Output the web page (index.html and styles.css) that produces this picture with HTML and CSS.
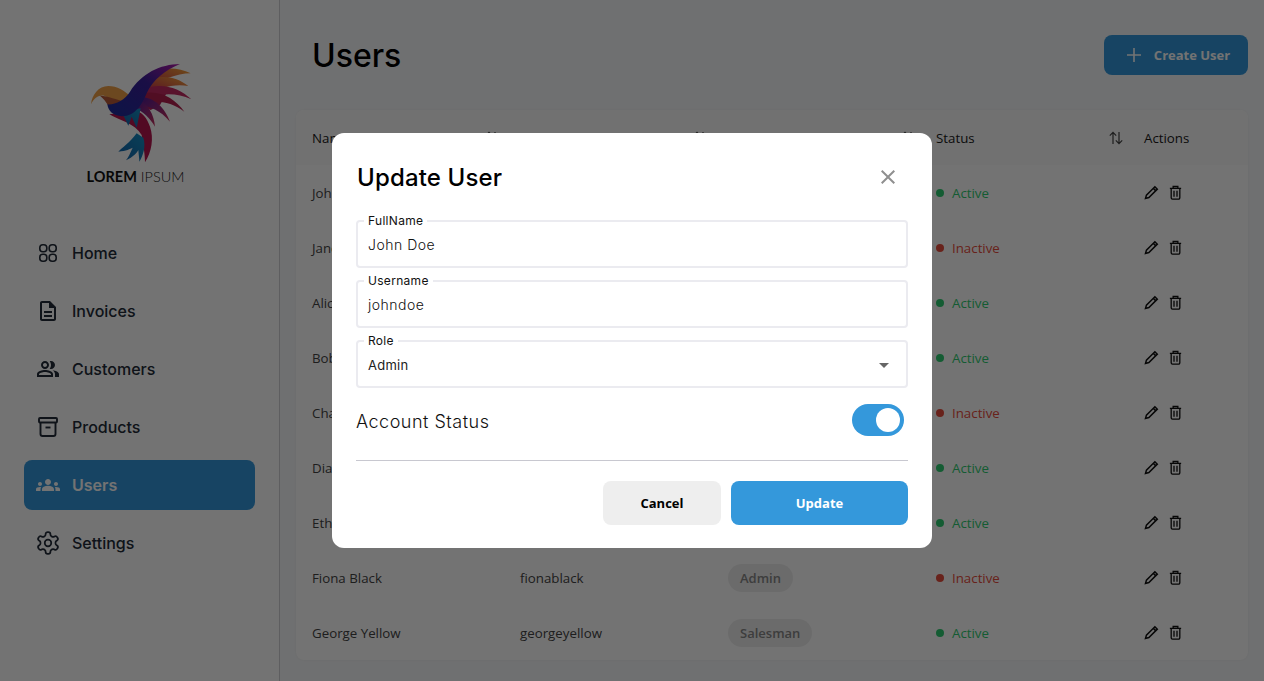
FILE: index.html
```html
<!DOCTYPE html>
<html lang="en">
<head>
    <meta charset="UTF-8">
    <meta name="viewport" content="width=device-width, initial-scale=1.0">
    <title>Users</title>
    <link rel="stylesheet" href="styles.css">
</head>
<body>
    <svg class="defs-only" width="0" height="0">
        <symbol id="sort" viewBox="0 0 16 16">
            <path d="M5 14V2.5M1.8 5.6 5 2.4l3.2 3.2M11 2v11.5M7.8 10.4l3.2 3.2 3.2-3.2" fill="none" stroke="currentColor" stroke-width="1.2"/>
        </symbol>
        <symbol id="pencil" viewBox="0 0 16 16">
            <path d="M11.6 1.8l2.6 2.6-9 9-3.6 1 1-3.6zM10 3.6l2.4 2.4" fill="none" stroke="currentColor" stroke-width="1.6"/>
        </symbol>
        <symbol id="trash" viewBox="0 0 16 16">
            <path d="M2 3.6h12M5.5 3.2V1.6h5v1.6M3.4 3.6v10a1.4 1.4 0 0 0 1.4 1.4h6.4a1.4 1.4 0 0 0 1.4-1.4v-10M6.4 6v6.4M9.6 6v6.4" fill="none" stroke="currentColor" stroke-width="1.4"/>
        </symbol>
    </svg>

    <div class="layout">
        <aside class="sidebar">
            <div class="logo">
                <svg class="logo-mark" viewBox="0 0 360 330" width="120" height="110">
                    <defs>
                        <linearGradient id="wing" x1="0" y1="1" x2="1" y2="0">
                            <stop offset="0" stop-color="#1c2f9c"/>
                            <stop offset="0.6" stop-color="#3a1f9a"/>
                            <stop offset="1" stop-color="#b01aa8"/>
                        </linearGradient>
                        <linearGradient id="feather" x1="0" y1="1" x2="1" y2="0">
                            <stop offset="0" stop-color="#c0164f"/>
                            <stop offset="1" stop-color="#f5a838"/>
                        </linearGradient>
                        <linearGradient id="feather2" x1="0" y1="0" x2="1" y2="1">
                            <stop offset="0" stop-color="#4a1a98"/>
                            <stop offset="1" stop-color="#c9305c"/>
                        </linearGradient>
                        <linearGradient id="tail" x1="1" y1="0" x2="0" y2="1">
                            <stop offset="0" stop-color="#1590c4"/>
                            <stop offset="1" stop-color="#1660a8"/>
                        </linearGradient>
                    </defs>
                    <path fill="#b02058" d="M190 70L245 65L262 110L240 150L212 165L175 150Z"/>
                    <path fill="url(#feather)" d="M190 68C225 38 285 30 332 55C290 55 240 75 200 105Z"/>
                    <path fill="url(#feather)" d="M185 88C230 55 285 62 325 93C280 85 235 100 195 120Z"/>
                    <path fill="#c42a62" d="M180 105C240 80 295 95 334 133C285 110 235 115 190 135Z"/>
                    <path fill="#b4204e" d="M178 118C235 100 285 130 313 170C275 140 230 135 185 145Z"/>
                    <path fill="url(#feather2)" d="M175 125C225 125 255 160 270 200C240 165 210 155 180 150Z"/>
                    <path fill="url(#feather2)" d="M170 130C205 145 222 180 225 215C210 190 190 170 165 160Z"/>
                    <path fill="#f0a048" d="M33 148C36 120 55 93 85 93C112 93 133 108 150 122L128 150C105 140 88 128 72 122C55 120 42 130 33 148Z"/>
                    <path fill="#b85a38" d="M60 122C85 122 110 135 135 140L85 152C78 140 70 130 60 122Z"/>
                    <path fill="#b5154f" d="M88 178C115 195 165 205 185 240C190 270 195 300 195 322C215 290 222 250 210 215C200 185 180 160 150 170Z"/>
                    <path fill="url(#tail)" d="M170 235C150 262 125 280 115 290C140 287 150 282 158 278C150 295 145 308 138 316C160 305 170 295 175 285C176 300 178 310 178 320C190 300 198 275 190 248Z"/>
                    <path fill="url(#tail)" d="M125 170L145 212L155 185L170 218L182 160Z"/>
                    <path fill="url(#wing)" d="M82 148C85 170 100 182 125 184C165 185 185 150 200 115C218 75 255 45 300 27C240 28 185 55 150 110C135 135 105 150 82 148Z"/>
                </svg>
                <div class="logo-text"><b>LOREM</b> IPSUM</div>
            </div>
            <nav class="nav">
                <a class="nav-item">
                    <svg class="nav-icon" viewBox="0 0 24 24" fill="none" stroke="currentColor" stroke-width="1.6">
                        <rect x="3.8" y="3.8" width="7" height="7" rx="3"/>
                        <rect x="13.2" y="3.8" width="7" height="7" rx="3"/>
                        <rect x="3.8" y="13.2" width="7" height="7" rx="3"/>
                        <rect x="13.2" y="13.2" width="7" height="7" rx="3"/>
                    </svg>
                    Home
                </a>
                <a class="nav-item">
                    <svg class="nav-icon" viewBox="0 0 24 24" fill="currentColor"><path d="M8 16h8v2H8zm0-4h8v2H8zm6-10H6c-1.1 0-2 .9-2 2v16c0 1.1.89 2 1.99 2H18c1.1 0 2-.9 2-2V8l-6-6zm4 18H6V4h7v5h5v11z"/></svg>
                    Invoices
                </a>
                <a class="nav-item">
                    <svg class="nav-icon" viewBox="0 0 24 24" fill="currentColor"><path d="M16.67 13.13C18.04 14.06 19 15.32 19 17v3h4v-3c0-2.18-3.57-3.47-6.33-3.87zM15 12c2.21 0 4-1.79 4-4s-1.79-4-4-4c-.47 0-.91.1-1.33.24C14.5 5.27 15 6.58 15 8s-.5 2.73-1.33 3.76c.42.14.86.24 1.33.24zM9 12c2.21 0 4-1.79 4-4s-1.79-4-4-4-4 1.79-4 4 1.79 4 4 4zm0-6c1.1 0 2 .9 2 2s-.9 2-2 2-2-.9-2-2 .9-2 2-2zM9 13c-2.67 0-8 1.34-8 4v3h16v-3c0-2.66-5.33-4-8-4zm6 5H3v-.99C3.2 16.29 6.3 15 9 15s5.8 1.29 6 2v1z"/></svg>
                    Customers
                </a>
                <a class="nav-item">
                    <svg class="nav-icon" viewBox="0 0 24 24" fill="none" stroke="currentColor" stroke-width="1.9">
                        <rect x="3" y="3" width="18" height="4.5" rx="1"/>
                        <path d="M4.5 7.5V19a2 2 0 0 0 2 2h11a2 2 0 0 0 2-2V7.5"/>
                        <path d="M9.5 12.5h5"/>
                    </svg>
                    Products
                </a>
                <a class="nav-item active">
                    <svg class="nav-icon" viewBox="0 0 24 24" fill="currentColor"><path d="M12 12.75c1.63 0 3.07.39 4.24.9 1.08.48 1.76 1.56 1.76 2.73V18H6v-1.61c0-1.18.68-2.26 1.76-2.73 1.17-.52 2.61-.91 4.24-.91zM4 13c1.1 0 2-.9 2-2s-.9-2-2-2-2 .9-2 2 .9 2 2 2zm1.13 1.1c-.37-.06-.74-.1-1.13-.1-.99 0-1.93.21-2.78.58C.48 14.9 0 15.62 0 16.43V18h4.5v-1.61c0-.83.23-1.61.63-2.29zM20 13c1.1 0 2-.9 2-2s-.9-2-2-2-2 .9-2 2 .9 2 2 2zm4 3.43c0-.81-.48-1.53-1.22-1.85-.85-.37-1.79-.58-2.78-.58-.39 0-.76.04-1.13.1.4.68.63 1.46.63 2.29V18H24v-1.57zM12 6c1.66 0 3 1.34 3 3s-1.34 3-3 3-3-1.34-3-3 1.34-3 3-3z"/></svg>
                    Users
                </a>
                <a class="nav-item">
                    <svg class="nav-icon" viewBox="1 1 22 22" fill="none" stroke="currentColor" stroke-width="1.6">
                        <path d="M12.22 2h-.44a2 2 0 0 0-2 2v.18a2 2 0 0 1-1 1.73l-.43.25a2 2 0 0 1-2 0l-.15-.08a2 2 0 0 0-2.73.73l-.22.38a2 2 0 0 0 .73 2.73l.15.1a2 2 0 0 1 1 1.72v.51a2 2 0 0 1-1 1.74l-.15.09a2 2 0 0 0-.73 2.73l.22.38a2 2 0 0 0 2.73.73l.15-.08a2 2 0 0 1 2 0l.43.25a2 2 0 0 1 1 1.73V20a2 2 0 0 0 2 2h.44a2 2 0 0 0 2-2v-.18a2 2 0 0 1 1-1.73l.43-.25a2 2 0 0 1 2 0l.15.08a2 2 0 0 0 2.73-.73l.22-.39a2 2 0 0 0-.73-2.73l-.15-.08a2 2 0 0 1-1-1.74v-.5a2 2 0 0 1 1-1.74l.15-.09a2 2 0 0 0 .73-2.73l-.22-.38a2 2 0 0 0-2.73-.73l-.15.08a2 2 0 0 1-2 0l-.43-.25a2 2 0 0 1-1-1.73V4a2 2 0 0 0-2-2z"/>
                        <circle cx="12" cy="12" r="3"/>
                    </svg>
                    Settings
                </a>
            </nav>
        </aside>

        <main class="main">
            <div class="page-head">
                <h1 class="page-title">Users</h1>
                <button class="create-btn">
                    <svg class="create-icon" viewBox="0 0 16 16" fill="none" stroke="currentColor" stroke-width="1.6"><path d="M8 1v14M1 8h14"/></svg>
                    Create User
                </button>
            </div>

            <div class="card">
                <table class="users-table">
                    <thead>
                        <tr>
                            <th><div class="th-inner">Name <svg class="sort-icon"><use href="#sort"/></svg></div></th>
                            <th><div class="th-inner">Username <svg class="sort-icon"><use href="#sort"/></svg></div></th>
                            <th><div class="th-inner">Role <svg class="sort-icon"><use href="#sort"/></svg></div></th>
                            <th><div class="th-inner">Status <svg class="sort-icon"><use href="#sort"/></svg></div></th>
                            <th class="col-actions">Actions</th>
                        </tr>
                    </thead>
                    <tbody>
                        <tr>
                            <td>John</td><td>johndoe</td><td><span class="pill">Admin</span></td>
                            <td><span class="status on">Active</span></td>
                            <td><div class="row-actions"><svg><use href="#pencil"/></svg><svg><use href="#trash"/></svg></div></td>
                        </tr>
                        <tr>
                            <td>Jane</td><td>janesmith</td><td><span class="pill">Salesman</span></td>
                            <td><span class="status off">Inactive</span></td>
                            <td><div class="row-actions"><svg><use href="#pencil"/></svg><svg><use href="#trash"/></svg></div></td>
                        </tr>
                        <tr>
                            <td>Alice</td><td>alicebrown</td><td><span class="pill">Admin</span></td>
                            <td><span class="status on">Active</span></td>
                            <td><div class="row-actions"><svg><use href="#pencil"/></svg><svg><use href="#trash"/></svg></div></td>
                        </tr>
                        <tr>
                            <td>Bob</td><td>bobwhite</td><td><span class="pill">Salesman</span></td>
                            <td><span class="status on">Active</span></td>
                            <td><div class="row-actions"><svg><use href="#pencil"/></svg><svg><use href="#trash"/></svg></div></td>
                        </tr>
                        <tr>
                            <td>Chad</td><td>chadgreen</td><td><span class="pill">Admin</span></td>
                            <td><span class="status off">Inactive</span></td>
                            <td><div class="row-actions"><svg><use href="#pencil"/></svg><svg><use href="#trash"/></svg></div></td>
                        </tr>
                        <tr>
                            <td>Diana</td><td>dianablue</td><td><span class="pill">Salesman</span></td>
                            <td><span class="status on">Active</span></td>
                            <td><div class="row-actions"><svg><use href="#pencil"/></svg><svg><use href="#trash"/></svg></div></td>
                        </tr>
                        <tr>
                            <td>Ethan</td><td>ethangray</td><td><span class="pill">Salesman</span></td>
                            <td><span class="status on">Active</span></td>
                            <td><div class="row-actions"><svg><use href="#pencil"/></svg><svg><use href="#trash"/></svg></div></td>
                        </tr>
                        <tr>
                            <td>Fiona Black</td><td>fionablack</td><td><span class="pill">Admin</span></td>
                            <td><span class="status off">Inactive</span></td>
                            <td><div class="row-actions"><svg><use href="#pencil"/></svg><svg><use href="#trash"/></svg></div></td>
                        </tr>
                        <tr>
                            <td>George Yellow</td><td>georgeyellow</td><td><span class="pill">Salesman</span></td>
                            <td><span class="status on">Active</span></td>
                            <td><div class="row-actions"><svg><use href="#pencil"/></svg><svg><use href="#trash"/></svg></div></td>
                        </tr>
                    </tbody>
                </table>
            </div>
        </main>
    </div>

    <div class="overlay">
        <div class="modal">
            <div class="modal-head">
                <h2 class="modal-title">Update User</h2>
                <svg class="close-icon" viewBox="0 0 24 24" fill="currentColor"><path d="M19 6.41L17.59 5 12 10.59 6.41 5 5 6.41 10.59 12 5 17.59 6.41 19 12 13.41 17.59 19 19 17.59 13.41 12z"/></svg>
            </div>
            <div class="form">
                <fieldset class="field">
                    <legend>FullName</legend>
                    <div class="field-value">John Doe</div>
                </fieldset>
                <fieldset class="field">
                    <legend>Username</legend>
                    <div class="field-value">johndoe</div>
                </fieldset>
                <fieldset class="field">
                    <legend>Role</legend>
                    <div class="field-value select-value">Admin <span class="caret"></span></div>
                </fieldset>
            </div>
            <div class="status-row">
                <span class="status-label">Account Status</span>
                <div class="toggle"><span class="knob"></span></div>
            </div>
            <div class="modal-actions">
                <button class="btn btn-cancel">Cancel</button>
                <button class="btn btn-update">Update</button>
            </div>
        </div>
    </div>
</body>
</html>
```

FILE: styles.css
```css
* { box-sizing: border-box; }
body {
    margin: 0;
    font-family: Inter, "Noto Sans", sans-serif;
    background: #fff;
    color: #111;
    height: 100vh;
    overflow: hidden;
}
.layout { display: flex; height: 100vh; }
.defs-only { position: absolute; }

.sidebar {
    width: 280px;
    flex-shrink: 0;
    background: #fff;
    border-right: 1px solid #d0d0d4;
    padding: 55px 24px 0;
}
.logo { display: flex; flex-direction: column; align-items: center; margin-bottom: 39px; }
.logo-mark { display: block; }
.logo-text {
    font-family: Lato, sans-serif;
    font-size: 14.5px;
    line-height: 24px;
    font-weight: 300;
    color: #222;
    margin-left: -8px;
}
.logo-text b { font-weight: 700; color: #111; }

.nav { display: flex; flex-direction: column; gap: 8px; }
.nav-item {
    display: flex;
    align-items: center;
    gap: 12px;
    height: 50px;
    padding-left: 12px;
    border-radius: 8px;
    font-size: 16px;
    font-weight: 500;
    color: #222b38;
}
.nav-item.active { background: #3498db; color: #fff; font-weight: 600; }
.nav-icon { width: 24px; height: 24px; flex-shrink: 0; }

.main {
    flex: 1;
    min-width: 0;
    background: #f7f9fb;
    padding: 35px 16px 21px;
}
.page-head { display: flex; justify-content: space-between; height: 40px; margin-bottom: 35px; }
.page-title { margin: 1px 0 0 16px; font-size: 32px; font-weight: 500; color: #000; line-height: 40px; }
.create-btn {
    display: flex;
    align-items: center;
    justify-content: center;
    gap: 12px;
    width: 144px;
    height: 40px;
    padding: 0 0 0 4px;
    border: none;
    border-radius: 8px;
    background: #3498db;
    color: #fff;
    font-family: "Open Sans", sans-serif;
    font-size: 13px;
    font-weight: 700;
}
.create-icon { width: 16px; height: 16px; }

.card { background: #fff; border-radius: 8px; overflow: hidden; box-shadow: 0 0 3px rgba(0, 0, 0, 0.06); }
.users-table { width: 100%; border-collapse: collapse; table-layout: fixed; font-family: "Open Sans", sans-serif; font-size: 13.3px; }
.users-table th, .users-table td { height: 55px; padding: 0 16px; text-align: left; vertical-align: middle; }
.users-table th { background: #fafbfb; font-weight: 500; color: #1a1a1a; }
.users-table td { color: #444; }
.th-inner { display: flex; justify-content: space-between; align-items: center; }
.col-actions { width: 120px; }
.sort-icon { width: 16px; height: 16px; color: #444; margin-right: -12px; }

.pill {
    display: inline-block;
    padding: 5px 12px;
    border-radius: 14px;
    background: #eee;
    color: #888;
    font-size: 13px;
    font-weight: 600;
    line-height: 18px;
}
.status { display: flex; align-items: center; gap: 8px; }
.status::before { content: ""; width: 8px; height: 8px; border-radius: 50%; background: currentColor; }
.status.on { color: #2ecc71; }
.status.off { color: #e74c3c; }
.row-actions { display: flex; gap: 9px; color: #111; }
.row-actions svg { width: 15px; height: 15px; }

.overlay {
    position: fixed;
    inset: 0;
    background: rgba(0, 0, 0, 0.55);
    display: flex;
    align-items: center;
    justify-content: center;
}
.modal {
    width: 600px;
    height: 415px;
    background: #fff;
    border-radius: 12px;
    padding: 24px 24px 23px;
    display: flex;
    flex-direction: column;
}
.modal-head { display: flex; justify-content: space-between; align-items: center; height: 40px; margin-bottom: 16px; }
.modal-title { margin: 0 0 0 1px; font-size: 24px; letter-spacing: 0.15px; font-weight: 500; color: #000; }
.close-icon { width: 24px; height: 24px; color: #8f8f8f; margin-right: 8px; }

.form { display: flex; flex-direction: column; gap: 5px; }
.field {
    margin: 0;
    height: 55px;
    padding: 0 10px;
    border: 2px solid #ebebf0;
    border-radius: 4px;
}
.field legend { margin-left: -4px; padding: 0 4px; font-size: 12px; line-height: 15px; letter-spacing: 0.3px; color: #111; font-weight: 400; }
.field-value { font-size: 14px; line-height: 20px; letter-spacing: 0.5px; font-weight: 300; color: #111; margin-top: 7px; }
.select-value { display: flex; justify-content: space-between; align-items: center; font-size: 13px; font-weight: 400; letter-spacing: 0.25px; color: #222; }
.caret {
    width: 0;
    height: 0;
    border-left: 5px solid transparent;
    border-right: 5px solid transparent;
    border-top: 5px solid #666;
    margin-right: 7px;
}

.status-row {
    display: flex;
    justify-content: space-between;
    align-items: center;
    height: 73px;
    font-size: 18px;
    font-weight: 300;
    letter-spacing: 0.5px;
    color: #111;
    border-bottom: 1px solid #c8c8d0;
    margin-bottom: 20px;
    padding-bottom: 8px;
}
.status-label { padding-top: 2px; }
.toggle {
    width: 52px;
    height: 32px;
    margin-right: 4px;
    border-radius: 16px;
    background: #3498db;
    display: flex;
    justify-content: flex-end;
    align-items: center;
    padding-right: 4px;
}
.knob { width: 24px; height: 24px; border-radius: 50%; background: #fff; }

.modal-actions { display: flex; justify-content: flex-end; gap: 10px; }
.btn {
    height: 44px;
    border: none;
    border-radius: 8px;
    font-family: "Open Sans", sans-serif;
    font-size: 13px;
    font-weight: 700;
}
.btn-cancel { width: 118px; background: #eee; color: #000; }
.btn-update { width: 177px; background: #3498db; color: #fff; }
```
